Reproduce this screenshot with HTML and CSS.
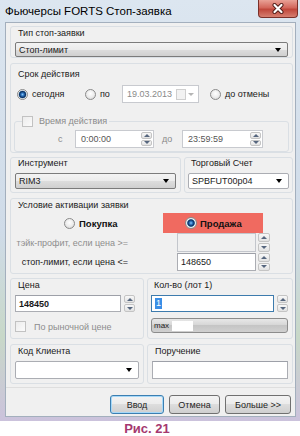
FILE: index.html
```html
<!DOCTYPE html>
<html lang="ru">
<head>
  <meta charset="UTF-8">
  <title>Фьючерсы FORTS Стоп-заявка</title>
  <link rel="stylesheet" href="styles.css">
</head>
<body>
  <div class="window">
    <div class="titlebar">
      <span class="title">Фьючерсы FORTS Стоп-заявка</span>
      <div class="close">
        <svg width="14" height="11" viewBox="0 0 14 11">
          <path d="M3.5 2 L10.5 9 M10.5 2 L3.5 9" stroke="#4e1b16" stroke-width="4" stroke-linecap="round"/>
          <path d="M3.5 2 L10.5 9 M10.5 2 L3.5 9" stroke="#fff" stroke-width="2.2" stroke-linecap="round"/>
        </svg>
      </div>
    </div>

    <div class="client">
      <div class="main">
        <div class="group g-type">
          <div class="glabel">Тип стоп-заявки</div>
          <div class="combo c-type"><span>Стоп-лимит</span></div>
        </div>

        <div class="group g-term">
          <div class="glabel">Срок действия</div>
          <div class="radio-row">
            <div class="ritem r-today"><span class="radio checked"></span>сегодня</div>
            <div class="ritem r-po"><span class="radio"></span>по</div>
            <div class="datebox">
              <span class="dval">19.03.2013</span>
              <span class="cal"></span>
              <span class="darrow"></span>
            </div>
            <div class="ritem r-never"><span class="radio"></span>до отмены</div>
          </div>
          <fieldset class="timeset">
            <legend><span class="check disabled"></span>Время действия</legend>
            <div class="trow">
              <span class="t-c">с</span>
              <div class="spinbox t-from">
                <span class="val">0:00:00</span>
                <div class="spin"><span class="up"></span><span class="down"></span></div>
              </div>
              <span class="t-do">до</span>
              <div class="spinbox t-to">
                <span class="val">23:59:59</span>
                <div class="spin"><span class="up"></span><span class="down"></span></div>
              </div>
            </div>
          </fieldset>
        </div>

        <div class="pair g-instr">
          <div class="group g-left">
            <div class="glabel">Инструмент</div>
            <div class="combo c-mid"><span>RIM3</span></div>
          </div>
          <div class="group g-acc">
            <div class="glabel">Торговый Счет</div>
            <div class="combo c-mid white"><span>SPBFUT00p04</span></div>
          </div>
        </div>

        <div class="group g-cond">
          <div class="glabel">Условие активации заявки</div>
          <div class="side-row">
            <div class="side buy"><span class="radio"></span>Покупка</div>
            <div class="side sell"><span class="radio big checked"></span>Продажа</div>
          </div>
          <div class="cond-row">
            <span class="cond-text off">тэйк-профит, если цена &gt;=</span>
            <div class="field off f-cond"></div>
            <div class="spin s-cond"><span class="up"></span><span class="down"></span></div>
          </div>
          <div class="cond-row second">
            <span class="cond-text">стоп-лимит, если цена &lt;=</span>
            <div class="field f-cond">148650</div>
            <div class="spin s-cond"><span class="up"></span><span class="down"></span></div>
          </div>
        </div>

        <div class="pair g-price">
          <div class="group g-left">
            <div class="glabel">Цена</div>
            <div class="num-row">
              <div class="field f-price bold">148450</div>
              <div class="spin s-num"><span class="up"></span><span class="down"></span></div>
            </div>
            <div class="market"><span class="check disabled"></span>По рыночной цене</div>
          </div>
          <div class="group g-qty">
            <div class="glabel">Кол-во (лот 1)</div>
            <div class="num-row">
              <div class="field f-qty focus"><span class="sel">1</span></div>
              <div class="spin s-num"><span class="up"></span><span class="down"></span></div>
            </div>
            <div class="maxbar"><span>max</span><span class="mval"></span></div>
          </div>
        </div>

        <div class="pair g-client">
          <div class="group g-left">
            <div class="glabel">Код Клиента</div>
            <div class="combo c-low white"><span></span></div>
          </div>
          <div class="group g-qty">
            <div class="glabel">Поручение</div>
            <div class="field f-note"></div>
          </div>
        </div>
      </div>

      <div class="footer">
        <button class="btn b-ok default">Ввод</button>
        <button class="btn b-cancel">Отмена</button>
        <button class="btn b-more">Больше &gt;&gt;</button>
      </div>
    </div>
  </div>
  <div class="caption">Рис. 21</div>
</body>
</html>
```

FILE: styles.css
```css
body {
  margin: 0;
  background-color: #ffffff;
  font-family: "Liberation Sans", Arial, sans-serif;
  font-size: 9px;
  color: #1a1a1a;
}

.window {
  width: 300px;
  height: 421px;
  box-sizing: border-box;
  padding: 0 4px 4px 5px;
  background: linear-gradient(to bottom, #dce6f0 0, #cfdbe8 55%, #c8d8c8 80%, #cbc2dc 100%);
  display: flex;
  flex-direction: column;
}

.titlebar {
  height: 22px;
  flex: none;
  display: flex;
  justify-content: space-between;
  align-items: flex-start;
}

.title {
  font-size: 11.5px;
  line-height: 23px;
  color: #000;
}

.close {
  width: 40px;
  height: 18px;
  box-sizing: border-box;
  margin-right: -2px;
  border: 1px solid #7a3029;
  border-top: none;
  border-radius: 0 0 4px 4px;
  background: linear-gradient(#e9a196, #d3675b 45%, #c0473b 55%, #d67f70);
  display: flex;
  align-items: center;
  justify-content: center;
}

.client {
  flex: 1;
  background-color: #f0f0f0;
  border: 1px solid #a3afbd;
  display: flex;
  flex-direction: column;
}

.main {
  padding: 3px 2px 0 4px;
  display: flex;
  flex-direction: column;
}

.group {
  border: 1px solid #dadfe4;
  border-radius: 3px;
  padding: 0 4px;
}

.glabel {
  line-height: 11px;
  margin-left: 3px;
}

/* combo boxes */
.combo {
  box-sizing: border-box;
  border: 1px solid #7b7b7b;
  border-radius: 2px;
  background: linear-gradient(#f3f3f3 0, #ebebeb 50%, #dddddd 50%, #d0d0d0 100%);
  display: flex;
  align-items: center;
  padding: 0 6px 0 3px;
}

.combo span {
  flex: 1;
}

.combo::after {
  content: "";
  border-left: 3.5px solid transparent;
  border-right: 3.5px solid transparent;
  border-top: 4px solid #000;
}

.combo.white {
  background: #fff;
  border-color: #abadb3;
}

/* inputs */
.field {
  box-sizing: border-box;
  border: 1px solid #abadb3;
  border-top-color: #9da0a8;
  background-color: #fff;
  padding-left: 3px;
  display: flex;
  align-items: center;
}

.field.off {
  background-color: #f0f0f0;
  border-color: #c3c6cc;
}

.field.focus {
  border-color: #3d7bad;
}

.bold {
  font-weight: bold;
}

.sel {
  background-color: #3a8ee6;
  color: #fff;
  padding: 0 1px;
  line-height: 11px;
}

.spin {
  width: 11px;
  display: flex;
  flex-direction: column;
  gap: 1px;
  flex: none;
}

.spin span {
  flex: 1;
  box-sizing: border-box;
  border: 1px solid #c4c4c4;
  border-radius: 2px;
  background: linear-gradient(#f8f8f8, #e2e2e2);
  display: flex;
  align-items: center;
  justify-content: center;
}

.spin .up::after {
  content: "";
  border-left: 3px solid transparent;
  border-right: 3px solid transparent;
  border-bottom: 3px solid #56667e;
}

.spin .down::after {
  content: "";
  border-left: 3px solid transparent;
  border-right: 3px solid transparent;
  border-top: 3px solid #56667e;
}

/* radios and checks */
.radio {
  width: 11px;
  height: 11px;
  box-sizing: border-box;
  flex: none;
  border: 1px solid #8a8a8a;
  border-radius: 50%;
  background: radial-gradient(circle at 50% 40%, #ffffff 0, #ebebeb 55%, #cdcdcd 100%);
  margin-right: 4px;
}

.radio.checked {
  background: radial-gradient(circle at 50% 50%, #8cc8f4 0, #2c73c0 1.5px, #0d3160 3px, #3f6f9e 3.6px, #f2f2f2 4.2px, #d6d6d6 100%);
}

.radio.big {
  width: 12px;
  height: 12px;
}

.check {
  width: 11px;
  height: 11px;
  box-sizing: border-box;
  flex: none;
  border: 1px solid #8f8f8f;
  background: linear-gradient(135deg, #dcdcdc, #ffffff);
}

.check.disabled {
  border-color: #c2c2c2;
  background: linear-gradient(135deg, #ececec, #fbfbfb);
}

/* type group */
.g-type {
  padding-top: 1px;
}

.c-type {
  height: 15px;
  margin-top: 3px;
}

/* term group */
.g-term {
  margin-top: 5px;
  padding-top: 5px;
}

.radio-row {
  margin-top: 5px;
  height: 18px;
  display: flex;
  align-items: center;
}

.ritem {
  display: flex;
  align-items: center;
  flex: none;
}

.r-today {
  width: 68px;
  margin-left: 2px;
}

.r-po {
  width: 37px;
}

.r-never {
  margin-left: 11px;
}

.datebox {
  width: 77px;
  height: 18px;
  box-sizing: border-box;
  border: 1px solid #c8cacf;
  background-color: #fff;
  display: flex;
  align-items: center;
  padding: 0 4px;
  color: #8a8a8a;
  flex: none;
}

.dval {
  flex: 1;
}

.cal {
  width: 8px;
  height: 9px;
  border: 1px solid #cfcfcf;
  background-color: #f2f2f2;
  margin-right: 2px;
}

.darrow {
  border-left: 3px solid transparent;
  border-right: 3px solid transparent;
  border-top: 3px solid #b5b5b5;
}

.timeset {
  margin: 12px -1px 0;
  padding: 3px 0;
  border: 1px solid #dadfe4;
  border-radius: 3px;
}

.timeset legend {
  margin-left: 7px;
  padding: 0 2px 0 0;
  height: 12px;
  display: flex;
  align-items: center;
  color: #8a8a8a;
}

.timeset legend .check {
  margin-right: 6px;
}

.trow {
  height: 18px;
  display: flex;
  align-items: center;
  color: #8a8a8a;
}

.t-c {
  margin-left: 43px;
  width: 17px;
}

.t-do {
  margin-left: 8px;
  width: 20px;
}

.spinbox {
  height: 18px;
  box-sizing: border-box;
  border: 1px solid #c8cacf;
  background-color: #fff;
  display: flex;
  align-items: stretch;
  padding: 1px 1px 1px 5px;
  color: #555;
}

.spinbox .val {
  flex: 1;
  display: flex;
  align-items: center;
}

.t-from {
  width: 79px;
}

.t-to {
  width: 81px;
}

/* paired groups */
.pair {
  display: flex;
  gap: 3px;
}

.g-left {
  width: 134px;
  box-sizing: border-box;
  flex: none;
}

.pair .group:last-child {
  flex: 1;
}

.g-instr {
  margin-top: 4px;
}

.g-instr .g-left {
  width: 171px;
}

.g-instr .group {
  padding-bottom: 3px;
}

.g-acc {
  padding: 0 3px;
}

.c-mid {
  height: 16px;
  margin-top: 4px;
}

/* condition group */
.g-cond {
  margin-top: 5px;
  padding-top: 1px;
  padding-bottom: 2px;
}

.side-row {
  margin-top: 2px;
  height: 20px;
  display: flex;
}

.side {
  display: flex;
  align-items: center;
  font-weight: bold;
  font-size: 9.5px;
  color: #111;
}

.buy {
  width: 148px;
  padding-left: 49px;
  box-sizing: border-box;
}

.sell {
  width: 100px;
  padding-left: 22px;
  box-sizing: border-box;
  background-color: #f06a60;
}

.sell .radio {
  margin-right: 3px;
}

.cond-row {
  height: 19px;
  display: flex;
  align-items: center;
}

.cond-row.second {
  height: 18px;
  margin-top: 1px;
}

.cond-text {
  width: 113px;
  text-align: right;
  flex: none;
}

.cond-text.off {
  color: #8d8d8d;
}

.f-cond {
  width: 79px;
  height: 100%;
  margin-left: 49px;
}

.s-cond {
  height: 100%;
  margin-left: 2px;
  width: 12px;
}

/* price and quantity */
.g-price {
  margin-top: 4px;
}

.g-price .group {
  padding-top: 1px;
  padding-bottom: 5px;
}

.g-price .g-qty {
  padding: 1px 4px 5px 3px;
}

.num-row {
  margin-top: 4px;
  height: 17px;
  display: flex;
  gap: 3px;
}

.f-price {
  width: 106px;
}

.f-qty {
  width: 123px;
}

.market {
  margin-top: 9px;
  display: flex;
  align-items: center;
  color: #8d8d8d;
}

.market .check {
  margin-right: 8px;
}

.maxbar {
  margin-top: 6px;
  height: 15px;
  box-sizing: border-box;
  border: 1px solid #8c8c8c;
  border-radius: 3px;
  background: linear-gradient(#e8e8e8, #d5d5d5 50%, #c5c5c5 50%, #d0d0d0);
  display: flex;
  align-items: center;
  padding-left: 2px;
  font-size: 8px;
  color: #222;
}

.mval {
  width: 21px;
  height: 10px;
  background-color: #fff;
  margin-left: 3px;
}

/* client and note */
.g-client {
  margin-top: 5px;
}

.g-client .group {
  padding-top: 1px;
  padding-bottom: 4px;
}

.g-client .g-qty {
  padding: 1px 4px 4px 4px;
}

.c-low {
  height: 18px;
  margin-top: 4px;
}

.f-note {
  height: 18px;
  margin-top: 4px;
}

/* buttons */
.footer {
  flex: 1;
  margin-top: 3px;
  border-top: 1px solid #dedede;
  display: flex;
  justify-content: flex-end;
  align-items: flex-start;
  gap: 5px;
  padding: 7px 4px 0 0;
}

.btn {
  height: 19px;
  box-sizing: border-box;
  border: 1px solid #707070;
  border-radius: 3px;
  background: linear-gradient(#f3f3f3, #ebebeb 50%, #dddddd 50%, #cfcfcf);
  font-family: "Liberation Sans", Arial, sans-serif;
  font-size: 9px;
  color: #1e1e1e;
  padding: 0;
}

.btn.default {
  border-color: #3c7fb1;
  box-shadow: inset 0 0 0 1px #a6d8f8;
}

.b-ok {
  width: 54px;
}

.b-cancel {
  width: 51px;
}

.b-more {
  width: 66px;
}

.caption {
  text-align: center;
  padding-right: 6px;
  font-size: 13px;
  font-weight: bold;
  line-height: 15px;
  color: #a5386f;
}
```
